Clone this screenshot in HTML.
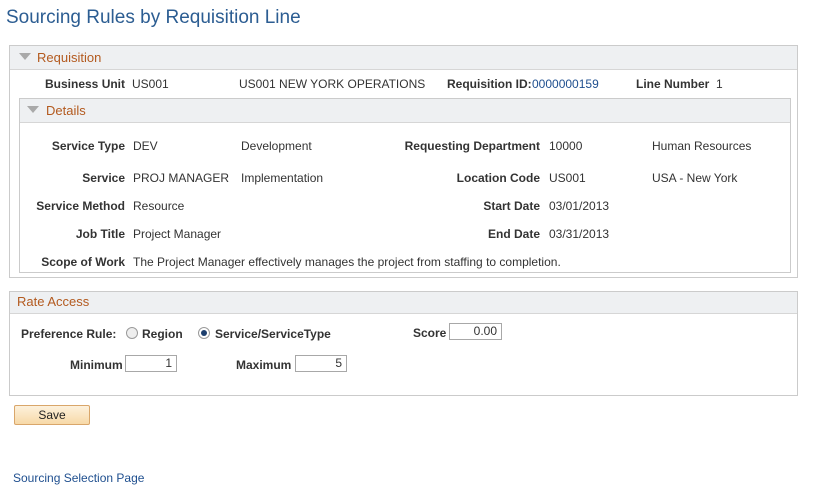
<!DOCTYPE html>
<html><head><style>
body{margin:0;width:840px;height:499px;background:#fff;font-family:"Liberation Sans",Arial,sans-serif;font-size:12px;color:#333;position:relative;overflow:hidden}
.a{position:absolute;white-space:nowrap;line-height:14px}
.b{font-weight:bold}
.r{text-align:right}
.box{position:absolute;border:1px solid #cbcbcb;background:#fff}
.hd{position:absolute;left:0;right:0;top:0;background:#eef0f2;border-bottom:1px solid #d6d6d6;color:#b35a1f;font-size:13px}
.tri{position:absolute;width:0;height:0;border-left:6px solid transparent;border-right:6px solid transparent;border-top:7px solid #a9a9a9}
.in{position:absolute;border:1px solid #a8a8a8;height:17px;box-sizing:border-box;text-align:right;padding-right:4px;line-height:15px;background:#fff}
.rad{position:absolute;width:10px;height:10px;border-radius:50%;border:1px solid #9a9a9a;background:#eee}
</style></head><body>
<div class="a" style="left:6px;top:8px;font-size:19px;line-height:20px;color:#2c5d92">Sourcing Rules by Requisition Line</div>

<div class="box" style="left:9px;top:45px;width:787px;height:231px">
 <div class="hd" style="height:23px"><div class="tri" style="left:9px;top:7px"></div><span class="a" style="left:27px;top:5px;line-height:14px">Requisition</span></div>
</div>
<div class="a b" style="left:45px;top:77px">Business Unit</div>
<div class="a" style="left:132px;top:77px">US001</div>
<div class="a" style="left:239px;top:77px">US001 NEW YORK OPERATIONS</div>
<div class="a b" style="left:447px;top:77px">Requisition ID:</div>
<div class="a" style="left:532px;top:77px;color:#1f4f8f">0000000159</div>
<div class="a b" style="left:636px;top:77px">Line Number</div>
<div class="a" style="left:716px;top:77px">1</div>

<div class="box" style="left:19px;top:98px;width:770px;height:173px">
 <div class="hd" style="height:23px"><div class="tri" style="left:7px;top:7px"></div><span class="a" style="left:26px;top:5px">Details</span></div>
</div>
<div class="a b r" style="left:20px;width:105px;top:139px">Service Type</div>
<div class="a" style="left:133px;top:139px">DEV</div>
<div class="a" style="left:241px;top:139px">Development</div>
<div class="a b r" style="left:380px;width:160px;top:139px">Requesting Department</div>
<div class="a" style="left:549px;top:139px">10000</div>
<div class="a" style="left:652px;top:139px">Human Resources</div>

<div class="a b r" style="left:20px;width:105px;top:171px">Service</div>
<div class="a" style="left:133px;top:171px">PROJ MANAGER</div>
<div class="a" style="left:241px;top:171px">Implementation</div>
<div class="a b r" style="left:380px;width:160px;top:171px">Location Code</div>
<div class="a" style="left:549px;top:171px">US001</div>
<div class="a" style="left:652px;top:171px">USA - New York</div>

<div class="a b r" style="left:20px;width:105px;top:199px">Service Method</div>
<div class="a" style="left:133px;top:199px">Resource</div>
<div class="a b r" style="left:380px;width:160px;top:199px">Start Date</div>
<div class="a" style="left:549px;top:199px">03/01/2013</div>

<div class="a b r" style="left:20px;width:105px;top:227px">Job Title</div>
<div class="a" style="left:133px;top:227px">Project Manager</div>
<div class="a b r" style="left:380px;width:160px;top:227px">End Date</div>
<div class="a" style="left:549px;top:227px">03/31/2013</div>

<div class="a b r" style="left:20px;width:105px;top:255px">Scope of Work</div>
<div class="a" style="left:133px;top:255px">The Project Manager effectively manages the project from staffing to completion.</div>

<div class="box" style="left:9px;top:291px;width:787px;height:103px">
 <div class="hd" style="height:21px"><span class="a" style="left:7px;top:3px">Rate Access</span></div>
</div>
<div class="a b" style="left:21px;top:327px">Preference Rule:</div>
<div class="rad" style="left:126px;top:327px"></div>
<div class="a b" style="left:142px;top:327px">Region</div>
<div class="rad" style="left:198px;top:327px;background:#fff"><div style="position:absolute;left:2px;top:2px;width:6px;height:6px;border-radius:50%;background:#1d3f6e"></div></div>
<div class="a b" style="left:215px;top:327px">Service/ServiceType</div>
<div class="a b" style="left:413px;top:326px">Score</div>
<div class="in" style="left:449px;top:323px;width:53px">0.00</div>
<div class="a b" style="left:70px;top:358px">Minimum</div>
<div class="in" style="left:125px;top:355px;width:52px">1</div>
<div class="a b" style="left:236px;top:358px">Maximum</div>
<div class="in" style="left:295px;top:355px;width:52px">5</div>

<div style="position:absolute;left:14px;top:405px;width:74px;height:18px;border:1px solid #d9a66a;border-radius:2px;background:linear-gradient(#fdf1dc,#f7d9a8);text-align:center;line-height:18px;color:#222">Save</div>

<div class="a" style="left:13px;top:471px;color:#1f4f8f">Sourcing Selection Page</div>
</body></html>
